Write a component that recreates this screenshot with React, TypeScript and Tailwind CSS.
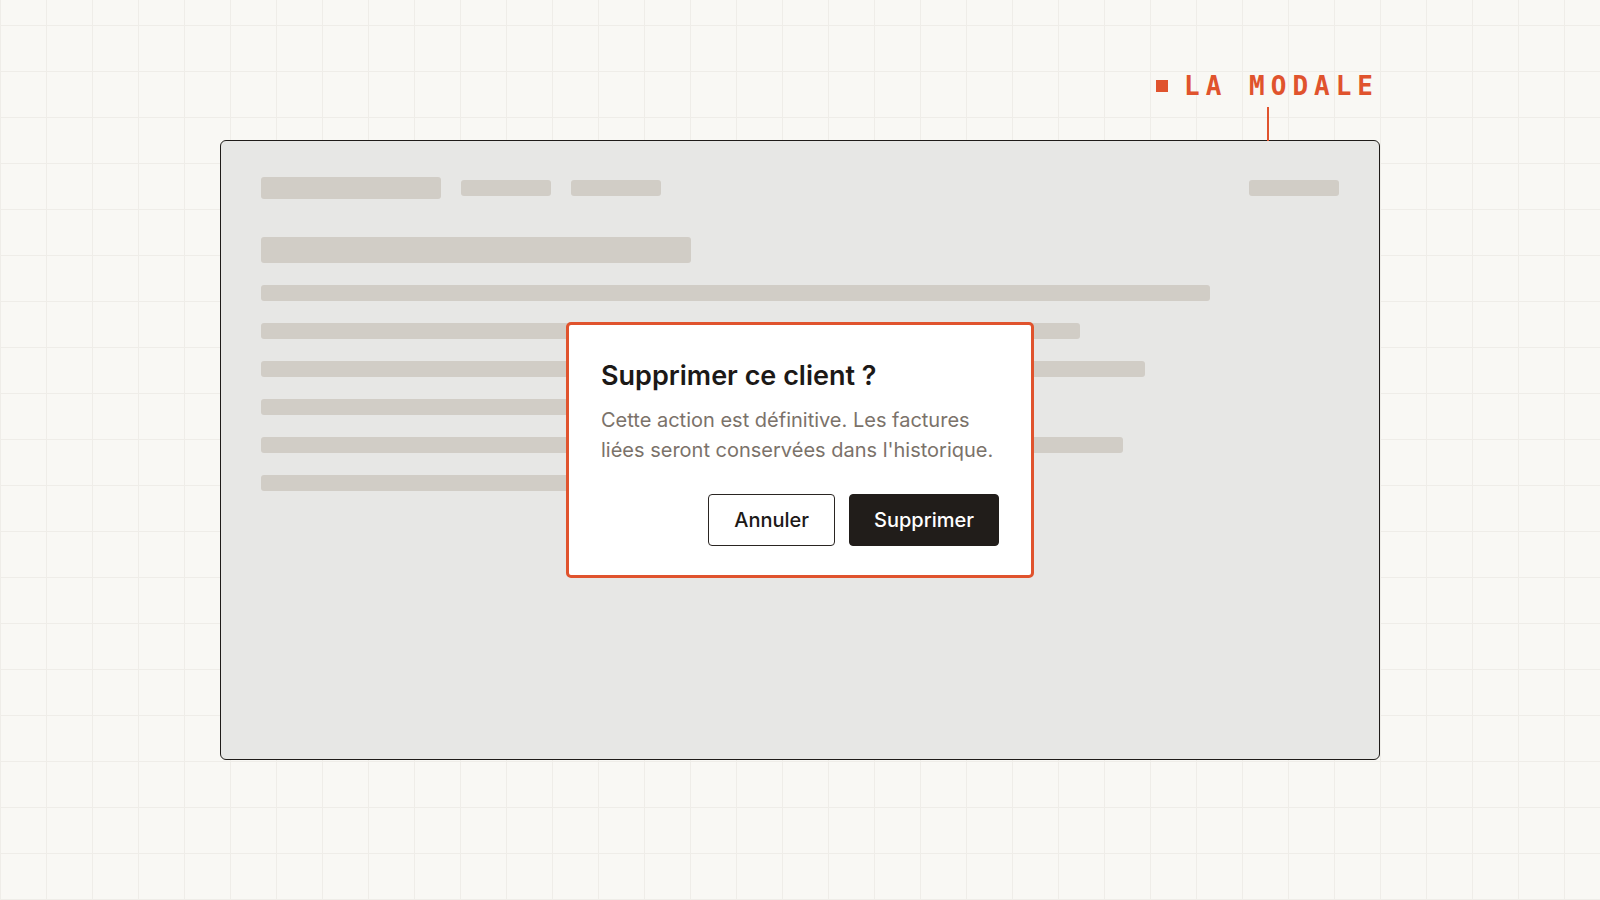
import React from "react";

const lineWidths = ["88%", "76%", "82%", "64%", "80%", "56%"];

function Bar({ className }: { className: string }) {
  return <div className={`rounded-[3px] bg-[#d1cdc6] ${className}`} />;
}

function ConfirmDialog() {
  return (
    <div className="w-[468px] rounded-[5px] border-[3px] border-[#e0532d] bg-white px-8 pt-[34px] pb-[29px]">
      <h2 className="text-[27px] leading-[34px] font-semibold text-[#1c1917]">
        Supprimer ce client ?
      </h2>
      <p className="mt-3 text-[20px] leading-[30px] text-[#7b726a]">
        Cette action est définitive. Les factures liées seront conservées dans
        l'historique.
      </p>
      <div className="mt-[29px] flex justify-end gap-3.5">
        <button className="h-[52px] rounded-[4px] border border-[#2a2522] bg-white px-[25px] text-[20px] font-medium text-[#1c1917]">
          Annuler
        </button>
        <button className="h-[52px] rounded-[4px] border border-[#211d1a] bg-[#211d1a] px-6 text-[20px] font-medium text-white">
          Supprimer
        </button>
      </div>
    </div>
  );
}

export default function App() {
  return (
    <div
      className="flex h-screen w-full items-center justify-center bg-[#f9f8f4] bg-[linear-gradient(to_right,#efede8_1px,transparent_1px),linear-gradient(to_bottom,#efede8_1px,transparent_1px)] bg-[size:46px_46px] bg-[position:0_25px]"
      style={{ fontFamily: "Inter, 'Noto Sans', sans-serif" }}
    >
      <div className="relative h-[620px] w-[1160px] rounded-md border-[1.5px] border-[#1f1b18] bg-[#e7e7e5] px-10 pt-9">
        {/* annotation tag above the frame */}
        <div className="absolute right-0 bottom-full flex flex-col items-center">
          <div className="flex items-center gap-4">
            <span className="h-3 w-3 bg-[#e0532d]" />
            <span className="font-['DejaVu_Sans_Mono',monospace] text-[26px] leading-[30px] font-bold tracking-[6px] text-[#e0532d]">
              LA MODALE
            </span>
          </div>
          <div className="mt-1.5 h-[34px] w-[2px] bg-[#e0532d]" />
        </div>

        {/* skeleton page behind the dialog */}
        <div className="flex items-center justify-between">
          <div className="flex items-center gap-5">
            <Bar className="h-[22px] w-[180px]" />
            <Bar className="h-4 w-[90px]" />
            <Bar className="h-4 w-[90px]" />
          </div>
          <Bar className="h-4 w-[90px]" />
        </div>
        <Bar className="mt-[38px] h-[26px] w-[430px]" />
        <div className="mt-[22px] flex flex-col gap-[22px]">
          {lineWidths.map((w, i) => (
            <div
              key={i}
              className="h-4 rounded-[3px] bg-[#d1cdc6]"
              style={{ width: w }}
            />
          ))}
        </div>

        <div className="absolute inset-0 flex items-center justify-center">
          <ConfirmDialog />
        </div>
      </div>
    </div>
  );
}
